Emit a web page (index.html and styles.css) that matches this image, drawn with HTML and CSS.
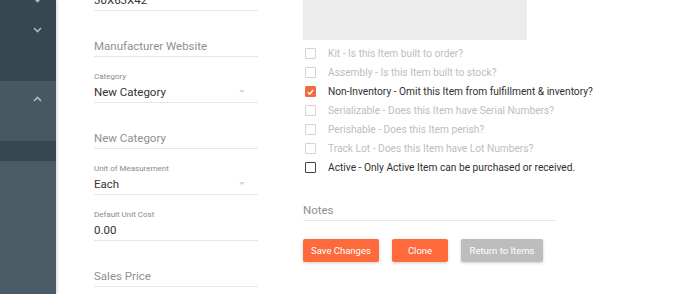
FILE: index.html
```html
<!DOCTYPE html>
<html>
  <head>
    <title>Edit Item</title>
    <link rel="stylesheet" href="styles.css">
  </head>
  <body>
    <div class="page">
      <aside class="sidebar">
        <div class="nav-item"><svg class="chev" width="9" height="6" viewBox="0 0 9 6"><polyline points="1,1 4.5,4.5 8,1"/></svg></div>
        <div class="nav-item"><svg class="chev" width="9" height="6" viewBox="0 0 9 6"><polyline points="1,1 4.5,4.5 8,1"/></svg></div>
        <div class="nav-spacer"></div>
        <div class="nav-group">
          <div class="nav-item"><svg class="chev" width="9" height="6" viewBox="0 0 9 6"><polyline points="1,5 4.5,1.5 8,5"/></svg></div>
        </div>
        <div class="nav-sub"></div>
        <div class="nav-rest"></div>
      </aside>

      <main class="content">
        <div class="col-left">
          <div class="field">
            <div class="value">30X63X42</div>
          </div>
          <div class="field">
            <div class="value placeholder">Manufacturer Website</div>
          </div>
          <div class="field">
            <label>Category</label>
            <div class="value select">New Category <span class="caret"></span></div>
          </div>
          <div class="field">
            <div class="value placeholder">New Category</div>
          </div>
          <div class="field">
            <label>Unit of Measurement</label>
            <div class="value select">Each <span class="caret"></span></div>
          </div>
          <div class="field">
            <label>Default Unit Cost</label>
            <div class="value">0.00</div>
          </div>
          <div class="field">
            <div class="value placeholder">Sales Price</div>
          </div>
        </div>

        <div class="col-right">
          <div class="image-box"></div>
          <ul class="checklist">
            <li class="disabled"><span class="box"></span>Kit - Is this Item built to order?</li>
            <li class="disabled"><span class="box"></span>Assembly - Is this Item built to stock?</li>
            <li><span class="box checked"><svg width="10" height="10" viewBox="0 0 10 10"><polyline points="2,5.2 4.2,7.3 8,2.8"/></svg></span>Non-Inventory - Omit this Item from fulfillment &amp; inventory?</li>
            <li class="disabled"><span class="box"></span>Serializable - Does this Item have Serial Numbers?</li>
            <li class="disabled"><span class="box"></span>Perishable - Does this Item perish?</li>
            <li class="disabled"><span class="box"></span>Track Lot - Does this Item have Lot Numbers?</li>
            <li><span class="box dark"></span>Active - Only Active Item can be purchased or received.</li>
          </ul>
          <div class="field notes">
            <div class="value placeholder">Notes</div>
          </div>
          <div class="buttons">
            <button class="btn primary save">Save Changes</button>
            <button class="btn primary clone">Clone</button>
            <button class="btn muted">Return to Items</button>
          </div>
        </div>
      </main>
    </div>
  </body>
</html>
```

FILE: styles.css
```css
body {
  margin: 0;
  background-color: #ffffff;
  font-family: Roboto, "Liberation Sans", Arial, sans-serif;
  overflow: hidden;
}
.page {
  display: flex;
  height: 294px;
  overflow: hidden;
}

/* sidebar */
.sidebar {
  width: 56px;
  flex-shrink: 0;
  display: flex;
  flex-direction: column;
  background-color: #36474f;
  box-shadow: 1px 0 3px rgba(0, 0, 0, 0.18);
  z-index: 1;
}
.sidebar > .nav-item:first-child {
  margin-top: -15px;
}
.nav-item {
  height: 30px;
  display: flex;
  align-items: center;
  justify-content: flex-end;
  padding-right: 14px;
}
.nav-group .nav-item {
  height: 36px;
}
.chev polyline {
  fill: none;
  stroke: #aeb9bf;
  stroke-width: 1.6;
}
.nav-spacer {
  height: 36px;
}
.nav-group {
  height: 60px;
  background-color: #475861;
}
.nav-sub {
  height: 20px;
  background-color: #37474f;
}
.nav-rest {
  flex: 1;
  background-color: #4a5b65;
}

/* form */
.content {
  flex: 1;
  display: flex;
  align-items: flex-start;
  padding-left: 38px;
}
.col-left {
  width: 164px;
  margin-top: -35px;
}
.col-right {
  width: 253px;
  margin-left: 45px;
}
.field {
  height: 45px;
  display: flex;
  flex-direction: column;
  justify-content: flex-end;
  border-bottom: 1px solid #e8e8e8;
}
.field label {
  font-size: 8px;
  line-height: 11px;
  color: #8a8a8a;
}
.value {
  font-size: 11.5px;
  line-height: 20px;
  color: #333333;
}
.value.placeholder {
  color: #8f8f8f;
}
.value.select {
  display: flex;
  justify-content: space-between;
  align-items: center;
  padding-right: 13px;
}
.caret {
  width: 0;
  height: 0;
  border-left: 3px solid transparent;
  border-right: 3px solid transparent;
  border-top: 3px solid #d6d6d6;
  margin-top: -2px;
}

.image-box {
  width: 224px;
  height: 40px;
  background-color: #ececec;
}
.checklist {
  list-style: none;
  margin: 4px 0 0 0;
  padding: 0;
}
.checklist li {
  height: 19px;
  display: flex;
  align-items: center;
  font-size: 10.2px;
  color: #2f2f2f;
  white-space: nowrap;
}
.checklist li.disabled {
  color: #bdbdbd;
}
.box {
  width: 9px;
  height: 9px;
  border: 1.5px solid #d3d3d3;
  border-radius: 1px;
  margin-left: 2px;
  margin-right: 12px;
  display: flex;
  align-items: center;
  justify-content: center;
  flex-shrink: 0;
}
.box.dark {
  border-color: #444444;
}
.box.checked {
  background-color: #f26b3f;
  border-color: #f26b3f;
}
.box.checked polyline {
  fill: none;
  stroke: #ffffff;
  stroke-width: 1.6;
}
.notes {
  margin-top: -2px;
}
.buttons {
  display: flex;
  gap: 13px;
  margin-top: 18px;
}
.btn {
  height: 23px;
  border: none;
  border-radius: 2px;
  font-family: inherit;
  font-size: 9.5px;
  color: #ffffff;
  padding: 0;
  box-shadow: 0 1px 3px rgba(0, 0, 0, 0.2);
  cursor: pointer;
}
.primary {
  background-color: #ff6a3d;
}
.save {
  width: 76px;
}
.clone {
  width: 56px;
}
.muted {
  width: 82px;
  background-color: #bdbdbd;
}
```
